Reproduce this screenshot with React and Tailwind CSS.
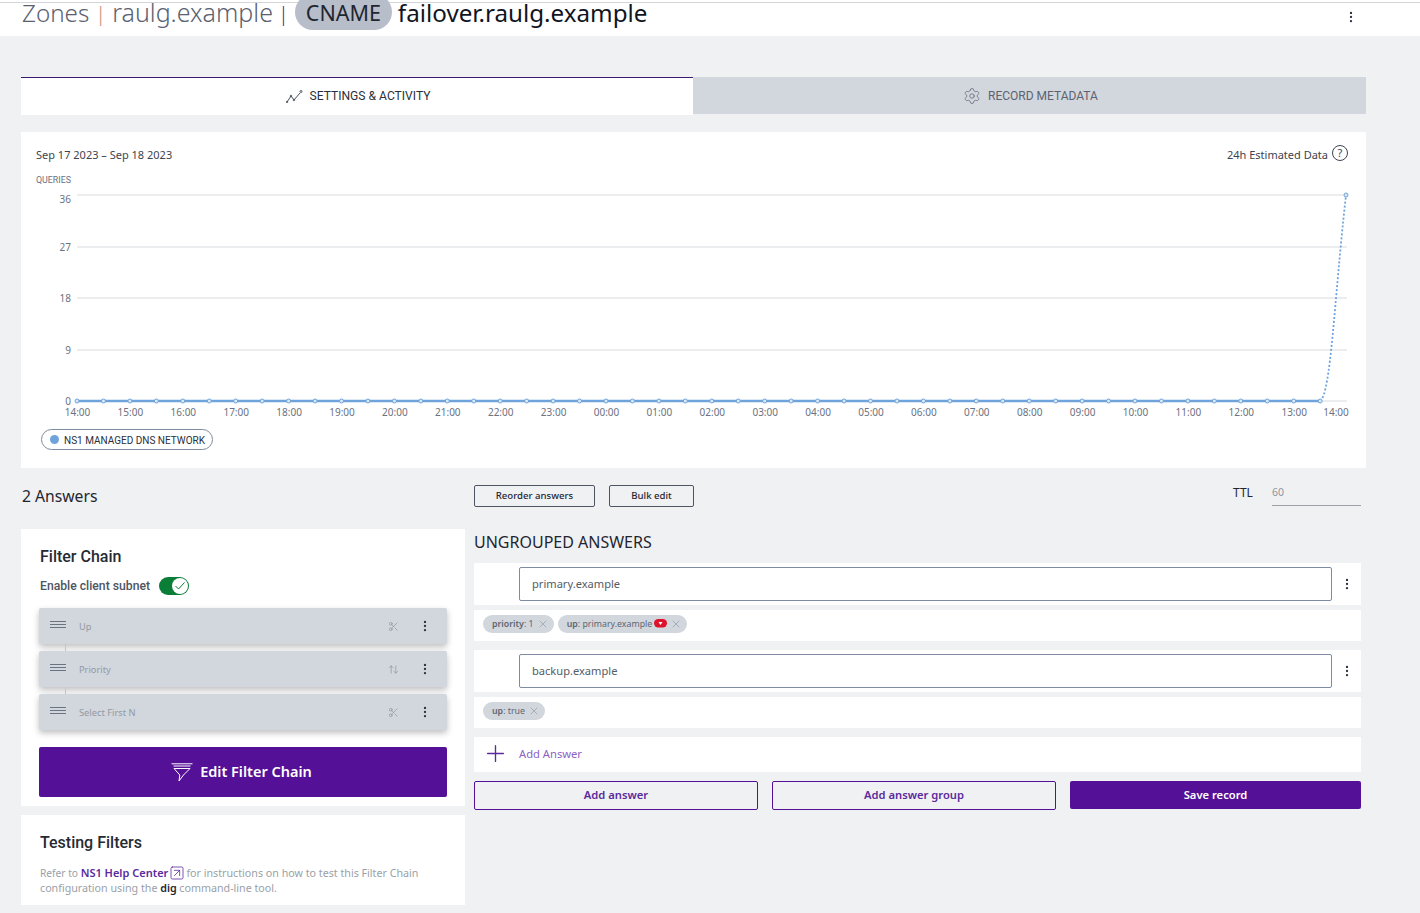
import { ArrowUpDown, EllipsisVertical, Plus, Scissors, Settings, SquareArrowUpRight, X } from 'lucide-react';

const PLEX = "font-['Noto_Sans',sans-serif]";
const DIN = "font-['Roboto',sans-serif]";

const HOURS = ['14:00', '15:00', '16:00', '17:00', '18:00', '19:00', '20:00', '21:00', '22:00', '23:00', '00:00', '01:00', '02:00', '03:00', '04:00', '05:00', '06:00', '07:00', '08:00', '09:00', '10:00', '11:00', '12:00', '13:00', '14:00'];
const GRID = [[36, 23, 8], [27, 75, 4], [18, 126, 4], [9, 178, 4], [0, 229, 4]];
const POINTS = Array.from({ length: 48 }, (_, i) => 56 + i * 26.45);

function Chart() {
  return (
    <svg width="1345" height="248" className="block">
      <text x="15" y="11" fontSize="9.5" fill="#6b7280" fontFamily="Roboto" textLength="35" lengthAdjust="spacingAndGlyphs">QUERIES</text>
      {GRID.map(([label, y, dy]) => (
        <g key={label}>
          <line x1="56" x2="1326" y1={y} y2={y} stroke="#d9dbdd" />
          <text x="50" y={y + dy} fontSize="10" fill="#6b7280" textAnchor="end" fontFamily="Noto Sans">{label}</text>
        </g>
      ))}
      {HOURS.map((h, i) => (
        <text key={i} x={i === 24 ? 1315 : 56.5 + i * 52.9} y="244" fontSize="10" fill="#6b7280" textAnchor="middle" fontFamily="Noto Sans">{h}</text>
      ))}
      <line x1="56" x2="1299" y1="229" y2="229" stroke="#6fa3dc" strokeWidth="2.5" />
      <path d="M1299 229 C1310 222 1313 130 1325 23" fill="none" stroke="#6fa3dc" strokeWidth="1.8" strokeDasharray="2 2" />
      {POINTS.map(x => (
        <circle key={x} cx={x} cy="229" r="2" fill="#dbe8f6" stroke="#6fa3dc" />
      ))}
      <circle cx="1325" cy="23" r="2" fill="#dbe8f6" stroke="#6fa3dc" />
    </svg>
  );
}

function Handle() {
  return (
    <svg width="16" height="8" viewBox="0 0 16 8" className="block">
      <path d="M0 .5h16M0 3.5h16M0 6.5h16" stroke="#6b7280" />
    </svg>
  );
}

function FilterRow({ label, icon }) {
  return (
    <div className="flex h-[36px] items-center rounded-[2px] bg-[#d2d6dd] shadow-[0_3px_6px_rgba(0,0,0,0.25)]">
      <div className="ml-[11px] w-[29px] -mt-[3px]"><Handle /></div>
      <span className={`${PLEX} flex-1 pt-[2px] text-[9.3px] text-[#9299a3]`}>{label}</span>
      <div className="mr-[18px] w-[12px] text-[#7f8691]">{icon}</div>
      <EllipsisVertical size={14} strokeWidth={2} className="mr-[15px] text-[#2f3640]" />
    </div>
  );
}

function Connector() {
  return <div className="ml-[26px] h-[7px] w-px bg-[#c3c7cd]" />;
}

function Tag({ name, value, down }) {
  return (
    <span className={`${PLEX} flex h-[18px] items-center rounded-full bg-[#d2d6dd] pl-[9px] pr-[5px] pt-[2px] text-[8.8px] text-[#5f6671]`}>
      <b className="font-semibold">{name}</b>:&nbsp;{value}
      {down && (
        <svg width="13" height="9" viewBox="0 0 13 9" className="ml-[2px] -mt-[3px]">
          <rect width="13" height="8.5" rx="4.2" fill="#e0112b" />
          <path d="M4.5 3h4L6.5 6z" fill="#fff" />
        </svg>
      )}
      <X size={12} strokeWidth={1} className="ml-[3px] -mt-[3px] text-[#7f8691]" />
    </span>
  );
}

function AnswerRow({ value }) {
  return (
    <div className="flex h-[42px] items-center bg-white pl-[45px]">
      <div className={`${PLEX} flex h-[34px] flex-1 items-center rounded-[2px] border border-[#7f8ba0] bg-white pl-[12px] pt-[1px] text-[11.1px] text-[#555c66]`}>{value}</div>
      <div className="flex w-[29px] justify-center"><EllipsisVertical size={14} strokeWidth={2} className="text-[#2f3640]" /></div>
    </div>
  );
}

function Funnel() {
  return (
    <svg width="22" height="19" viewBox="0 0 22 19" fill="none" stroke="#fff" strokeWidth="1">
      <path d="M.5 .8h21M2.5 3h17" />
      <path d="M3 5.5h16l-6.5 6.5-4.5 6 .8-6z" />
    </svg>
  );
}

export default function App() {
  return (
    <div className={`${PLEX} min-h-[913px] bg-[#f0f1f3] text-[#1f2630]`}>
      {/* top bar, the title is cut off by the line above it */}
      <div className="h-[36px] overflow-hidden bg-white pt-[2px]">
        <div className="border-t border-[#d4d5d7]">
          <div className="flex h-[33px] items-center pl-[22px] pr-[62px] -mt-[6px] text-[25px] font-light">
            <span className="-mt-[1px] text-[24.2px] text-[#5a6270]">Zones</span>
            <span className="mx-[6px] text-[20px] text-[#c98a7a]">|</span>
            <span className="-mt-[1px] text-[#5a6270]">raulg.example</span>
            <span className="ml-[5px] mr-[6px] text-[20px] text-[#5a1c75]">|</span>
            <span className="flex h-[36px] w-[97px] -mt-[4px] items-center justify-center rounded-full bg-[#b7bdc9] pt-[3px] text-[21.5px] font-normal text-[#1f2630]">CNAME</span>
            <span className="ml-[6px] flex-1 text-[24.2px] font-normal text-[#10151f]">failover.raulg.example</span>
            <EllipsisVertical size={14} strokeWidth={2} className="mt-[6px] text-[#2f3640]" />
          </div>
        </div>
      </div>

      <div className="pl-[21px] pr-[54px] pt-[41px]">
        <div className="grid h-[37px] grid-cols-[672px_1fr] items-start">
          <div className={`${DIN} flex h-[38px] items-center justify-center gap-[7px] border-t border-[#3b1a6f] bg-white pl-[2px] text-[12.1px] text-[#2a303a]`}>
            <svg width="17" height="13" viewBox="0 0 17 13" fill="none" stroke="#4b5360">
              <path d="M1 12l4-6 3 4 6-7" />
              <circle cx="1" cy="12" r=".8" />
              <circle cx="5" cy="6" r=".8" />
              <circle cx="8" cy="10" r=".8" />
              <circle cx="15" cy="1.5" r="1" />
            </svg>
            SETTINGS &amp; ACTIVITY
          </div>
          <div className={`${DIN} flex h-[37px] items-center justify-center gap-[7px] bg-[#d2d6dd] pl-[2px] text-[12px] text-[#5c6370]`}>
            <Settings size={18} strokeWidth={1} />
            RECORD METADATA
          </div>
        </div>

        <div className="mt-[18px] h-[336px] bg-white">
          <div className="flex h-[40px] items-start justify-between pl-[15px] pr-[18px] pt-[15px] text-[11px] text-[#3d4450]">
            <span>Sep 17 2023 – Sep 18 2023</span>
            <span className="flex items-center gap-[4px]">
              24h Estimated Data
              <span className="-mt-[4px] flex h-[16px] w-[16px] items-center justify-center rounded-full border border-[#3d4450] text-[11px]">?</span>
            </span>
          </div>
          <Chart />
          <div className="mt-[9px] ml-[20px] flex h-[21px] w-[172px] items-center gap-[5px] rounded-full border border-[#7f8ba0] pl-[8px]">
            <span className="h-[9px] w-[9px] rounded-full bg-[#6fa3dc]" />
            <span className={`${DIN} whitespace-nowrap pt-[1px] text-[10px] text-[#2a303a]`}>NS1 MANAGED DNS NETWORK</span>
          </div>
        </div>

        <div className="flex w-[1340px] gap-[9px]">
          {/* left column */}
          <div className="w-[444px] shrink-0">
            <div className="flex h-[61px] items-center pb-[4px] pl-[1px] text-[15.7px] text-[#1f2630]">2 Answers</div>
            <div className="h-[277px] bg-white px-[18px] pt-[18px]">
              <h3 className={`${DIN} pl-[1px] text-[16px] font-medium leading-[20px] text-[#262b33]`}>Filter Chain</h3>
              <div className="mt-[9px] flex h-[20px] items-center gap-[9px] pl-[1px]">
                <span className={`${DIN} text-[12.2px] font-medium text-[#4d5561]`}>Enable client subnet</span>
                <span className="flex h-[18px] w-[30px] items-center justify-end rounded-full bg-[#0a7d36] pr-[1px]">
                  <svg width="16" height="16" viewBox="0 0 16 16">
                    <circle cx="8" cy="8" r="8" fill="#fff" />
                    <path d="M3.5 8l3 3 6-6.5" fill="none" stroke="#0a7d36" />
                  </svg>
                </span>
              </div>
              <div className="mt-[12px]">
                <FilterRow label="Up" icon={<Scissors size={11} strokeWidth={1.2} />} />
                <Connector />
                <FilterRow label="Priority" icon={<ArrowUpDown size={11} strokeWidth={1.2} />} />
                <Connector />
                <FilterRow label="Select First N" icon={<Scissors size={11} strokeWidth={1.2} />} />
              </div>
              <button className="mt-[17px] flex h-[50px] w-full items-center justify-center gap-[7px] rounded-[2px] bg-[#541097] pr-[3px] text-[14.5px] font-semibold text-white">
                <Funnel />
                Edit Filter Chain
              </button>
            </div>
            <div className="mt-[9px] h-[90px] bg-white pl-[19px] pr-[18px] pt-[18px]">
              <h3 className={`${DIN} text-[16px] font-medium leading-[20px] text-[#262b33]`}>Testing Filters</h3>
              <p className="mt-[12px] text-[10.7px] leading-[15px] text-[#9a9fa8]">
                <span className="text-[10.2px]">Refer to </span><b className="text-[11px] font-semibold text-[#5b2a9d]">NS1 Help Center</b>
                <SquareArrowUpRight size={16} strokeWidth={1.2} className="mx-[1px] -mt-[2px] inline text-[#5b2a9d]" />
                for instructions on how to test this Filter Chain configuration using the <b className="font-semibold text-[#1f2630]">dig</b> command-line tool.
              </p>
            </div>
          </div>

          {/* right column */}
          <div className="min-w-0 flex-1">
            <div className="flex h-[61px] items-start pt-[17px]">
              <button className="h-[22px] w-[121px] rounded-[2px] border border-[#4d5561] text-[9.6px] font-medium text-[#1f2630]">Reorder answers</button>
              <button className="ml-[14px] h-[22px] w-[85px] rounded-[2px] border border-[#4d5561] text-[9.6px] font-medium text-[#1f2630]">Bulk edit</button>
              <span className="ml-[539px] mt-[-1px] text-[12px] text-[#1f2630]">TTL</span>
              <div className="ml-auto -mt-[1px] h-[22px] w-[89px] border-b border-[#9a9fa8] text-[10.5px] leading-[16px] text-[#8f959e]">60</div>
            </div>
            <h2 className="flex h-[34px] items-start pt-[3px] text-[16px] leading-[20px] text-[#1f2630]">UNGROUPED ANSWERS</h2>
            <AnswerRow value="primary.example" />
            <div className="mt-[5px] flex h-[31px] items-start gap-[4px] bg-white pl-[9px] pt-[5px]">
              <Tag name="priority" value="1" />
              <Tag name="up" value="primary.example" down />
            </div>
            <div className="mt-[9px]"><AnswerRow value="backup.example" /></div>
            <div className="mt-[5px] flex h-[31px] items-start bg-white pl-[9px] pt-[5px]">
              <Tag name="up" value="true" />
            </div>
            <div className="mt-[9px] flex h-[35px] items-center bg-white pl-[8px] text-[11.2px] text-[#8c62c4]">
              <Plus size={27} strokeWidth={1.2} className="-mt-[2px] text-[#5b2a9d]" />
              <span className="ml-[10px] -mt-[1px]">Add Answer</span>
            </div>
            <div className="mt-[9px] grid h-[29px] grid-cols-[284px_284px_291px] gap-[14px]">
              <button className="rounded-[2px] border border-[#541097] pb-[1px] text-[11.2px] font-semibold text-[#5b2a9d]">Add answer</button>
              <button className="rounded-[2px] border border-[#541097] pb-[1px] text-[11.2px] font-semibold text-[#5b2a9d]">Add answer group</button>
              <button className="h-[28px] rounded-[2px] bg-[#541097] text-[11.2px] font-semibold text-white">Save record</button>
            </div>
          </div>
        </div>
      </div>
    </div>
  );
}
